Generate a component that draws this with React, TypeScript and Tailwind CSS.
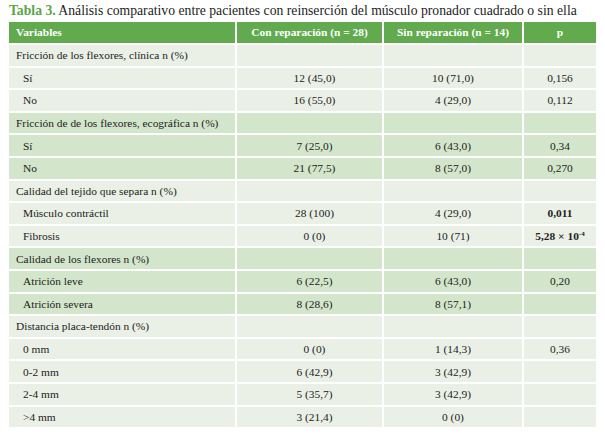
import React from "react";

type Row = {
  label: string;
  sub?: boolean;
  con?: string;
  sin?: string;
  p?: React.ReactNode;
};

type Group = { dark: boolean; rows: Row[] };

const groups: Group[] = [
  {
    dark: false,
    rows: [
      { label: "Fricción de los flexores, clínica n (%)" },
      { label: "Sí", sub: true, con: "12 (45,0)", sin: "10 (71,0)", p: "0,156" },
      { label: "No", sub: true, con: "16 (55,0)", sin: "4 (29,0)", p: "0,112" },
    ],
  },
  {
    dark: true,
    rows: [
      { label: "Fricción de de los flexores, ecográfica n (%)" },
      { label: "Sí", sub: true, con: "7 (25,0)", sin: "6 (43,0)", p: "0,34" },
      { label: "No", sub: true, con: "21 (77,5)", sin: "8 (57,0)", p: "0,270" },
    ],
  },
  {
    dark: false,
    rows: [
      { label: "Calidad del tejido que separa n (%)" },
      { label: "Músculo contráctil", sub: true, con: "28 (100)", sin: "4 (29,0)", p: <b>0,011</b> },
      {
        label: "Fibrosis",
        sub: true,
        con: "0 (0)",
        sin: "10 (71)",
        p: (
          <b>
            5,28 × 10<sup className="text-[7px]">-4</sup>
          </b>
        ),
      },
    ],
  },
  {
    dark: true,
    rows: [
      { label: "Calidad de los flexores n (%)" },
      { label: "Atrición leve", sub: true, con: "6 (22,5)", sin: "6 (43,0)", p: "0,20" },
      { label: "Atrición severa", sub: true, con: "8 (28,6)", sin: "8 (57,1)" },
    ],
  },
  {
    dark: false,
    rows: [
      { label: "Distancia placa-tendón n (%)" },
      { label: "0 mm", sub: true, con: "0 (0)", sin: "1 (14,3)", p: "0,36" },
      { label: "0-2 mm", sub: true, con: "6 (42,9)", sin: "3 (42,9)" },
      { label: "2-4 mm", sub: true, con: "5 (35,7)", sin: "3 (42,9)" },
      { label: ">4 mm", sub: true, con: "3 (21,4)", sin: "0 (0)" },
    ],
  },
];

export default function App() {
  return (
    <div className="w-[605px] h-[438px] bg-white overflow-hidden text-[#222] [font-family:Liberation_Serif,serif]">
      <div className="pl-[9px] pt-[3px] h-[22px] text-[13.7px] leading-[16px] text-[#1c1c1c] whitespace-nowrap">
        <b className="text-[#5aa646]">Tabla 3.</b> Análisis comparativo entre pacientes con reinserción del músculo pronador cuadrado o sin ella
      </div>
      <div className="ml-[9px] w-[587px] grid grid-cols-[226px_145px_138px_72px] gap-[2px] text-[11.4px]">
        <div className="h-[21px] bg-[#61aa4d] text-white font-bold flex items-center pl-[7px]">Variables</div>
        <div className="h-[21px] bg-[#61aa4d] text-white font-bold flex items-center justify-center">Con reparación (n = 28)</div>
        <div className="h-[21px] bg-[#61aa4d] text-white font-bold flex items-center justify-center">Sin reparación (n = 14)</div>
        <div className="h-[21px] bg-[#61aa4d] text-white font-bold flex items-center justify-center">p</div>
        {groups.map((g) =>
          g.rows.map((r, i) => {
            const bg = g.dark ? "bg-[#d3e6cb]" : "bg-[#eaf0e6]";
            return (
              <React.Fragment key={g.rows[0].label + i}>
                <div className={`h-[20.6px] ${bg} flex items-center pt-[1px] ${r.sub ? "pl-[14px]" : "pl-[7px]"}`}>
                  {r.label}
                </div>
                <div className={`h-[20.6px] ${bg} flex items-center justify-center pt-[1px] pl-[10px]`}>{r.con}</div>
                <div className={`h-[20.6px] ${bg} flex items-center justify-center pt-[1px]`}>{r.sin}</div>
                <div className={`h-[20.6px] ${bg} flex items-center justify-center pt-[1px]`}>{r.p}</div>
              </React.Fragment>
            );
          })
        )}
      </div>
    </div>
  );
}
